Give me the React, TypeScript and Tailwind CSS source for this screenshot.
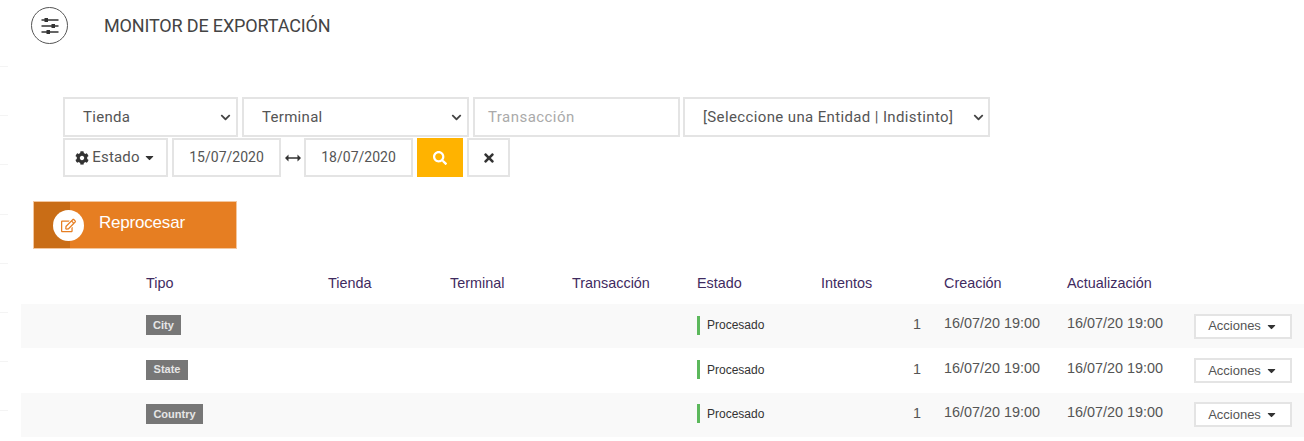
import { FaCaretDown, FaChevronDown, FaCog, FaRegEdit, FaSearch, FaTimes } from "react-icons/fa";

const rows = [
  { tipo: "City", bg: "bg-[#f9f9f9]", badge: "w-[35px]" },
  { tipo: "State", bg: "bg-white", badge: "w-[42px]" },
  { tipo: "Country", bg: "bg-[#f9f9f9]", badge: "w-[57px]" },
];

const headers = ["Tipo", "Tienda", "Terminal", "Transacción", "Estado", "Intentos", "Creación", "Actualización"];

function SliderIcon() {
  return (
    <svg width="22" height="22" viewBox="0 0 22 22" fill="none" stroke="#333" strokeWidth="1.4">
      <path d="M2.5 5h17M2.5 11h17M2.5 17h17" />
      <rect x="5.5" y="3" width="3.5" height="4" fill="#333" stroke="none" />
      <rect x="12.5" y="9" width="3.5" height="4" fill="#333" stroke="none" />
      <rect x="7.5" y="15" width="3.5" height="4" fill="#333" stroke="none" />
    </svg>
  );
}

function ArrowIcon() {
  return (
    <svg width="16" height="8" viewBox="0 0 16 8" fill="#333">
      <path d="M3.5 0.5V3.3H12.5V0.5L16 4L12.5 7.5V4.7H3.5V7.5L0 4Z" />
    </svg>
  );
}

export default function App() {
  return (
    <div className="relative w-[1304px] h-[441px] overflow-hidden bg-white text-[14px] text-[#555] font-['Roboto',sans-serif]">
      <div className="absolute left-0 top-[66px] flex flex-col gap-[48.2px]">
        {[0, 1, 2, 3, 4, 5, 6, 7].map((i) => (
          <div key={i} className="w-2 h-px bg-[#f4f4f4]" />
        ))}
      </div>

      {/* header */}
      <div className="flex items-center h-[37px] mt-[7px] ml-[31px]">
        <div className="flex items-center justify-center w-[37px] h-[37px] rounded-full border-[1.5px] border-[#555]">
          <SliderIcon />
        </div>
        <h1 className="ml-[36px] text-[18px] tracking-[-0.15px] text-[#444] font-normal">MONITOR DE EXPORTACIÓN</h1>
      </div>

      {/* filtros */}
      <div className="ml-[63px] mt-[53px] flex flex-col gap-px">
        <div className="flex h-10 text-[15px]">
          <div className="flex items-center justify-between w-[175px] border-2 border-[#e4e4e4] pl-[18px] pr-[5px] tracking-[0.3px]">
            Tienda
            <FaChevronDown className="text-[11px] text-[#444]" />
          </div>
          <div className="flex items-center justify-between w-[227px] ml-[4px] border-2 border-[#e4e4e4] pl-[18px] pr-[5px] tracking-[0.3px]">
            Terminal
            <FaChevronDown className="text-[11px] text-[#444]" />
          </div>
          <div className="flex items-center w-[207px] ml-[4px] border-2 border-[#e4e4e4] pl-[13px] tracking-[0.45px] text-[#aaa]">
            Transacción
          </div>
          <div className="flex items-center justify-between w-[307px] ml-[3px] border-2 border-[#e4e4e4] pl-[18px] pr-[4px] tracking-[0.37px]">
            [Seleccione una Entidad | Indistinto]
            <FaChevronDown className="text-[11px] text-[#444]" />
          </div>
        </div>
        <div className="flex items-center h-[39px]">
          <div className="flex items-center justify-center gap-[3px] w-[105px] h-full border-2 border-[#e4e4e4] text-[15px] tracking-[0.2px]">
            <FaCog className="text-[14px] text-[#333]" />
            Estado
            <FaCaretDown className="text-[13px] text-[#333]" />
          </div>
          <div className="flex items-center justify-center w-[109px] h-full ml-[4px] pb-px border-2 border-[#e4e4e4]">15/07/2020</div>
          <div className="flex items-center justify-center w-[23px]">
            <ArrowIcon />
          </div>
          <div className="flex items-center justify-center w-[109px] h-full pb-px border-2 border-[#e4e4e4]">18/07/2020</div>
          <div className="flex items-center justify-center w-[46px] h-full ml-[4px] bg-[#ffb300] text-white">
            <FaSearch className="text-[14px]" />
          </div>
          <div className="flex items-center justify-center w-[43px] h-full ml-[4px] border-2 border-[#e4e4e4]">
            <FaTimes className="text-[14px] text-[#333]" />
          </div>
        </div>
      </div>

      {/* reprocesar */}
      <div className="flex items-center w-[204px] h-[48px] ml-[33px] mt-[24px] bg-[#e67e22] border border-[#f3c79f] text-white font-['Liberation_Sans',sans-serif]">
        <div className="relative flex items-center justify-center w-[36px] h-full bg-[#c96d16]">
          <div className="absolute left-[19px] flex items-center justify-center w-[31px] h-[31px] rounded-full bg-white text-[#e67e22]">
            <FaRegEdit className="text-[15px]" />
          </div>
        </div>
        <span className="ml-[29px] mb-[4px] text-[17px] tracking-[-0.2px]">Reprocesar</span>
      </div>

      {/* tabla */}
      <div className="ml-[21px] mt-[24px] font-['Liberation_Sans',sans-serif]">
        <div className="grid grid-cols-[125px_182px_122px_122px_125px_124px_123px_123px_127px_1fr] h-[31px] items-center pb-[11px] text-[14.4px] text-[#3f2b5f]">
          <div />
          {headers.map((h) => (
            <div key={h}>{h}</div>
          ))}
        </div>
        {rows.map((r) => (
          <div
            key={r.tipo}
            className={`grid grid-cols-[125px_182px_122px_122px_125px_124px_123px_123px_127px_1fr] h-[44.4px] items-center ${r.bg}`}
          >
            <div />
            <div>
              <span className={`flex items-center justify-center h-[20px] mb-[2px] ${r.badge} bg-[#777] text-[11px] font-bold text-[#e6e6e6]`}>
                {r.tipo}
              </span>
            </div>
            <div />
            <div />
            <div />
            <div className="flex items-center gap-[7px] mb-[2px]">
              <span className="w-[3px] h-[19px] bg-[#5cb85c]" />
              <span className="text-[12px] text-[#333]">Procesado</span>
            </div>
            <div className="pr-[23px] mb-[2px] text-right text-[14.4px] text-[#555]">1</div>
            <div className="mb-[4px] text-[14.4px]">16/07/20 19:00</div>
            <div className="mb-[4px] text-[14.4px]">16/07/20 19:00</div>
            <div className="flex items-center justify-center gap-[4px] w-[98px] h-[25px] border-2 border-[#e4e4e4] bg-white text-[13px]">
              Acciones
              <FaCaretDown className="text-[13px] text-[#333]" />
            </div>
          </div>
        ))}
      </div>
    </div>
  );
}
